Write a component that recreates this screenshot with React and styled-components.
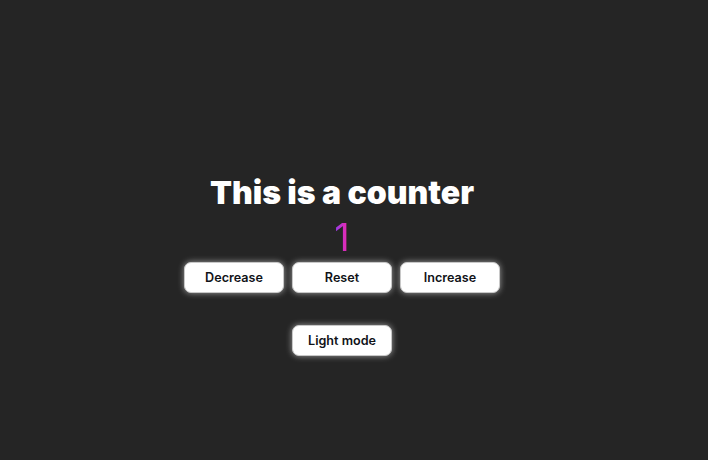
import React, { useState } from 'react';
import styled, { createGlobalStyle } from 'styled-components';

const GlobalStyle = createGlobalStyle`
    html, body {
        margin: 0;
        padding: 0;
        background: #252525;
        font-family: Inter, "Noto Sans", sans-serif;
    }
`

const Page = styled.div`
    min-height: 100vh;
    box-sizing: border-box;
    display: flex;
    flex-direction: column;
    align-items: center;
    padding: 173px 24px 0 0;
`

const Title = styled.h1`
    margin: 0;
    font-size: 32px;
    line-height: 39px;
    font-weight: 900;
    color: #ffffff;
    letter-spacing: 0;
`

const Count = styled.div`
    font-size: 38px;
    line-height: 46px;
    font-weight: 400;
    margin-top: 2px;
    background: linear-gradient(90deg, #8c3ff0, #ff24a2);
    -webkit-background-clip: text;
    background-clip: text;
    color: transparent;
`

const ButtonRow = styled.div`
    display: flex;
    gap: 8px;
    margin-top: ${p => p.$top || 0}px;
`

const Button = styled.button`
    width: 100px;
    height: 31px;
    box-sizing: border-box;
    background: #ffffff;
    border: 1px solid #c8c8c8;
    border-radius: 7px;
    box-shadow: 0 0 6px rgba(255, 255, 255, 0.55);
    font-family: Inter, "Noto Sans", sans-serif;
    font-size: 12.6px;
    font-weight: 600;
    color: #111318;
    cursor: pointer;
`

const App = () => {
    const [count, setCount] = useState(1);
    const [light, setLight] = useState(false);

    return (<>
        <GlobalStyle />
        <Page>
            <Title>This is a counter</Title>
            <Count>{count}</Count>
            <ButtonRow $top={2}>
                <Button onClick={() => setCount(count - 1)}>Decrease</Button>
                <Button onClick={() => setCount(0)}>Reset</Button>
                <Button onClick={() => setCount(count + 1)}>Increase</Button>
            </ButtonRow>
            <ButtonRow $top={32}>
                <Button onClick={() => setLight(!light)}>Light mode</Button>
            </ButtonRow>
        </Page>
    </>)
}

export default App
